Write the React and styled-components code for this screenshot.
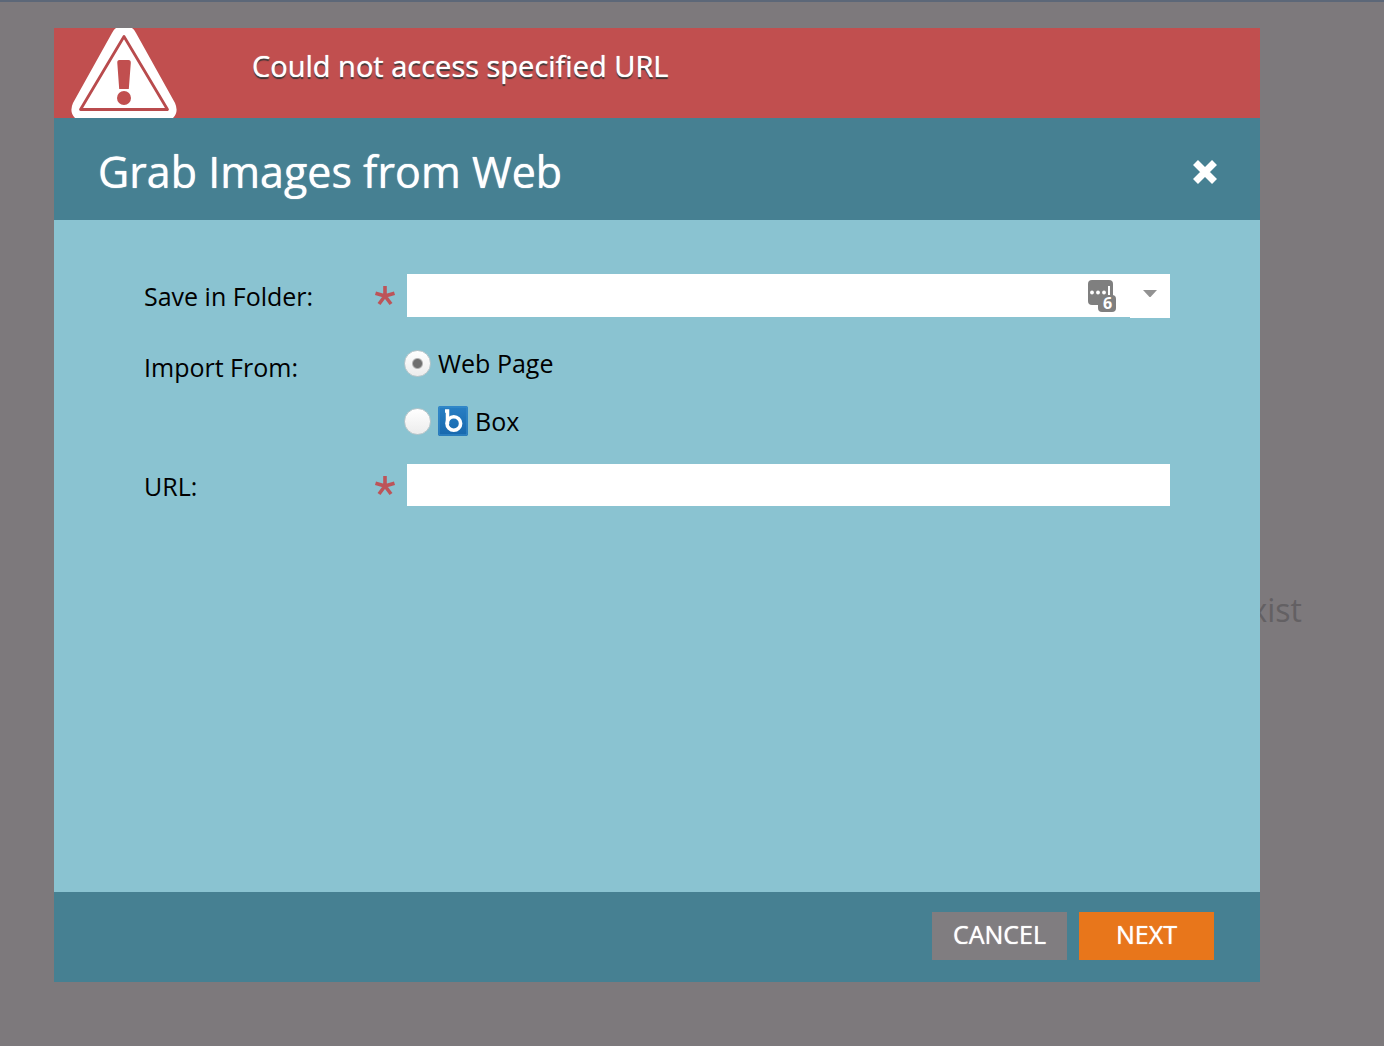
import React, { useState } from "react";
import styled, { createGlobalStyle } from "styled-components";

const GlobalStyle = createGlobalStyle`
  *, *::before, *::after { box-sizing: border-box; }
  body {
    margin: 0;
    background: #7d797c;
    color: #000;
    font-family: "Open Sans", "Noto Sans", sans-serif;
  }
  button, input { font: inherit; color: inherit; }
`;

const Page = styled.div`
  position: relative;
  display: flex;
  min-height: 100vh;
  padding: 26px 124px 64px 54px;
  border-top: 2px solid #5c6778;
`;

const Backdrop = styled.p`
  position: absolute;
  top: 586px;
  right: 82px;
  margin: 0;
  color: #636063;
  font-size: 32px;
  line-height: 44px;
`;

const Dialog = styled.section`
  position: relative;
  display: flex;
  flex: 1;
  flex-direction: column;
  min-width: 0;
  background: #8ac3d1;
`;

const Alert = styled.div`
  display: flex;
  align-items: flex-start;
  gap: 75px;
  height: 90px;
  padding-left: 17px;
  background: #c14f4f;
  color: #fff;
`;

const AlertText = styled.p`
  margin: 0;
  padding-top: 18px;
  font-size: 29px;
  line-height: 40px;
  text-shadow: 0 0 1px #fff, 0 2px 1px #333;
`;

const TitleBar = styled.header`
  display: flex;
  align-items: center;
  justify-content: space-between;
  height: 102px;
  padding: 6px 42px 0 44px;
  background: #468092;
  color: #fff;
`;

const Title = styled.h1`
  margin: 0;
  font-size: 43px;
  font-weight: 400;
  line-height: 60px;
  text-shadow: 0 0 1px #fff;
`;

const IconButton = styled.button`
  display: flex;
  align-items: center;
  justify-content: center;
  width: ${(p) => p.$width}px;
  height: ${(p) => p.$height}px;
  padding: 0;
  border: 0;
  background: ${(p) => p.$fill || "transparent"};
  cursor: pointer;
`;

const Form = styled.form`
  display: flex;
  flex: 1;
  flex-direction: column;
`;

const Fields = styled.div`
  display: flex;
  flex: 1;
  flex-direction: column;
  gap: 24px;
  padding: 54px 90px;
  font-size: 25px;
  line-height: 44px;
`;

const FieldRow = styled.div`
  display: grid;
  grid-template-columns: 230px 33px 1fr;
  align-items: start;
`;

const ChoiceRow = styled.div`
  display: grid;
  grid-template-columns: 260px 1fr;
  padding-top: 3px;
  align-items: start;
`;

const Required = styled.span`
  display: flex;
  align-items: center;
  height: 42px;
`;

const Combo = styled.div`
  position: relative;
  display: flex;
  align-items: flex-start;
`;

const TextInput = styled.input`
  flex: 1;
  width: 100%;
  min-width: 0;
  height: ${(p) => p.$height}px;
  padding: 0 12px;
  border: 0;
  border-radius: 0;
  background: #fff;
`;

const KeyBadge = styled.span`
  position: absolute;
  top: 6px;
  right: 50px;
  display: flex;
`;

const Options = styled.div`
  display: flex;
  flex-direction: column;
  gap: 22px;
  height: 95px;
`;

const Option = styled.label`
  display: flex;
  align-items: center;
  gap: 7px;
  line-height: 36px;
`;

const Radio = styled.input`
  appearance: none;
  width: 27px;
  height: 27px;
  margin: 0;
  border: 1px solid #b9c6ca;
  border-radius: 50%;
  background: linear-gradient(#fff, #ececec);
  &:checked {
    background: radial-gradient(circle, #6f6f6f 0 4px, transparent 6px),
      linear-gradient(#fff, #ececec);
  }
`;

const Footer = styled.footer`
  display: flex;
  justify-content: flex-end;
  gap: 12px;
  padding: 20px 46px 22px;
  background: #468092;
`;

const Action = styled.button`
  width: 135px;
  height: 48px;
  padding: 0 0 4px;
  border: 0;
  background: ${(p) => (p.$primary ? "#e8761b" : "#807d80")};
  color: #fff;
  font-size: 25px;
  line-height: 36px;
  text-shadow: 0 0 1px #fff;
  cursor: pointer;
`;

const WarningIcon = () => (
  <svg width="106" height="90" viewBox="0 0 106 90" aria-hidden="true">
    <path d="M45 0H61Q63 1 65 5L104 75Q108 84 102 90H4Q-2 84 2 75L41 5Q43 1 45 0Z" fill="#fff" />
    <path d="M53 8.500L96.500 81.500H9.500Z" fill="none" stroke="#b94b4d" strokeWidth="2.800" strokeLinejoin="round" />
    <path d="M48.500 32H57.500Q60 32 59.800 35L57.800 61H48.200L46.300 35Q46 32 48.500 32Z" fill="#c14f4f" />
    <circle cx="53" cy="70" r="7" fill="#c14f4f" />
  </svg>
);

const CloseIcon = () => (
  <svg width="26" height="26" viewBox="0 0 26 26" aria-hidden="true">
    <path d="M3.500 3.500L22.500 22.500M22.500 3.500L3.500 22.500" stroke="#fff" strokeWidth="7" />
  </svg>
);

const StarIcon = () => (
  <svg width="22" height="22" viewBox="0 0 22 22" aria-label="required" role="img">
    <path d="M11 12V2M11 12L1.500 9.200M11 12L20.500 9.200M11 12L5 20M11 12L17 20" fill="none" stroke="#bd5459" strokeWidth="3.600" />
  </svg>
);

const PasswordIcon = () => (
  <svg width="32" height="37" viewBox="0 0 32 37" aria-hidden="true">
    <rect x="0" y="0" width="25" height="25" rx="4" fill="#7f7f7f" />
    <g fill="#fff">
      <circle cx="4" cy="12.500" r="1.900" />
      <circle cx="10" cy="12.500" r="1.900" />
      <circle cx="16" cy="12.500" r="1.900" />
      <rect x="20" y="6" width="2" height="9" />
    </g>
    <rect x="10" y="15" width="18" height="17" rx="4" fill="#7f7f7f" />
    <text x="19.500" y="29" fill="#fff" fontFamily="Open Sans, sans-serif" fontSize="16" fontWeight="700" textAnchor="middle">6</text>
  </svg>
);

const ArrowIcon = () => (
  <svg width="16" height="14" viewBox="0 0 16 14" aria-hidden="true">
    <path d="M1 1H15L9 7.500Q8 8.500 7 7.500Z" fill="#929292" />
  </svg>
);

const BoxIcon = () => (
  <svg width="30" height="30" viewBox="0 0 30 30" aria-hidden="true">
    <defs>
      <linearGradient id="box-fill" x1="0" y1="0" x2="0" y2="1">
        <stop offset="0" stopColor="#287fc4" />
        <stop offset="1" stopColor="#1768ad" />
      </linearGradient>
    </defs>
    <rect width="30" height="30" rx="2" fill="url(#box-fill)" />
    <rect x="1" y="1" width="28" height="28" rx="1" fill="none" stroke="#3b8fcc" />
    <path d="M7 5H9.500V18" fill="none" stroke="#fff" strokeWidth="3.500" />
    <circle cx="15.800" cy="17.500" r="6.800" fill="none" stroke="#fff" strokeWidth="3.600" />
  </svg>
);

export default function App() {
  const [source, setSource] = useState("web");
  return (
    <>
      <GlobalStyle />
      <Page>
        <Backdrop>exist</Backdrop>
        <Dialog role="dialog" aria-labelledby="dialog-title">
          <Alert role="alert">
            <WarningIcon />
            <AlertText>Could not access specified URL</AlertText>
          </Alert>
          <TitleBar>
            <Title id="dialog-title">Grab Images from Web</Title>
            <IconButton type="button" aria-label="Close" $width={26} $height={26}>
              <CloseIcon />
            </IconButton>
          </TitleBar>
          <Form onSubmit={(e) => e.preventDefault()}>
            <Fields>
              <FieldRow>
                <label htmlFor="folder">Save in Folder:</label>
                <Required><StarIcon /></Required>
                <Combo>
                  <TextInput id="folder" type="text" $height={43} />
                  <KeyBadge><PasswordIcon /></KeyBadge>
                  <IconButton type="button" aria-label="Show folders" $width={40} $height={44} $fill="#fff">
                    <ArrowIcon />
                  </IconButton>
                </Combo>
              </FieldRow>
              <ChoiceRow role="radiogroup" aria-labelledby="import-from">
                <span id="import-from">Import From:</span>
                <Options>
                  <Option>
                    <Radio type="radio" name="source" checked={source === "web"} onChange={() => setSource("web")} />
                    Web Page
                  </Option>
                  <Option>
                    <Radio type="radio" name="source" checked={source === "box"} onChange={() => setSource("box")} />
                    <BoxIcon />
                    Box
                  </Option>
                </Options>
              </ChoiceRow>
              <FieldRow>
                <label htmlFor="url">URL:</label>
                <Required><StarIcon /></Required>
                <TextInput id="url" type="text" $height={42} />
              </FieldRow>
            </Fields>
            <Footer>
              <Action type="button">CANCEL</Action>
              <Action type="submit" $primary>NEXT</Action>
            </Footer>
          </Form>
        </Dialog>
      </Page>
    </>
  );
}
